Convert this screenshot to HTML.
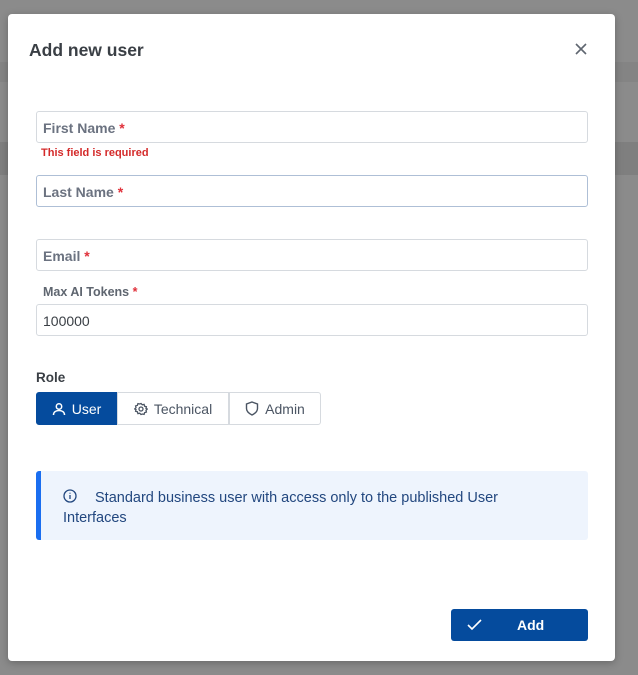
<!DOCTYPE html>
<html><head><meta charset="utf-8"><style>
*{box-sizing:border-box;margin:0;padding:0}
body{width:638px;height:675px;background:#8b8b8b;font-family:"Liberation Sans",sans-serif;position:relative;overflow:hidden}
.bg1{position:absolute;left:0;right:0;top:62px;height:20px;background:#848484}
.bg2{position:absolute;left:0;right:0;top:142px;height:33px;background:#7f7f7f}
.modal{position:absolute;left:8px;top:14px;width:607px;height:647px;background:#fff;border-radius:4px;box-shadow:0 2px 8px rgba(0,0,0,.25)}
.title{position:absolute;left:21px;top:26px;font-size:17.5px;font-weight:bold;color:#3a3f45}
.close{position:absolute;left:566px;top:28px}
.inp{position:absolute;left:28px;width:552px;height:32px;border:1px solid #d6dadf;border-radius:3px;font-size:14px;color:#6b7280;font-weight:bold;padding:8px 6px}
.inp b{color:#e0303a}
.err{position:absolute;left:33px;top:133px;font-size:11px;font-weight:bold;color:#d42a2a}
.lbl{position:absolute;left:35px;font-size:12.5px;font-weight:bold;color:#5f6670}
.lbl b{color:#e0303a}
.role{position:absolute;left:28px;top:356px;font-size:13.5px;color:#3a3f45;font-weight:bold}
.seg{position:absolute;top:378px;height:33px;border:1px solid #d6dadf;font-size:14px;color:#4b5563;display:flex;align-items:center;gap:6px;justify-content:center}
.info{position:absolute;left:28px;top:457px;width:552px;height:69px;background:#eef4fd;border-left:5px solid #1a6ef0;border-radius:3px;color:#22477f;font-size:14.5px;line-height:20px;padding:17px 10px 0 22px}
.btn{position:absolute;left:443px;top:595px;width:137px;height:32px;background:#054b9d;border-radius:3px;color:#fff;font-weight:bold;font-size:14px}
</style></head><body>
<div class="bg1"></div><div class="bg2"></div>
<div class="modal">
<div class="title">Add new user</div>
<svg class="close" width="14" height="14" viewBox="0 0 14 14"><path d="M2 2L12 12M12 2L2 12" stroke="#5f6670" stroke-width="1.6"/></svg>
<div class="inp" style="top:97px">First Name <b>*</b></div>
<div class="err">This field is required</div>
<div class="inp" style="top:161px;border-color:#aebfd6">Last Name <b>*</b></div>
<div class="inp" style="top:225px">Email <b>*</b></div>
<div class="lbl" style="top:271px">Max AI Tokens <b>*</b></div>
<div class="inp" style="top:290px;font-weight:normal;color:#3a3f45">100000</div>
<div class="role">Role</div>
<div class="seg" style="left:28px;width:81px;background:#054b9d;color:#fff;border-color:#054b9d;border-radius:3px 0 0 3px"><svg width="14" height="14" viewBox="0 0 14 14" fill="none" stroke="#fff" stroke-width="1.5"><circle cx="7" cy="4.5" r="2.7"/><path d="M1.5 13c0-3 2.5-4.5 5.5-4.5s5.5 1.5 5.5 4.5"/></svg>User</div>
<div class="seg" style="left:109px;width:112px"><svg width="14" height="14" viewBox="0 0 14 14" fill="none" stroke="#4b5563" stroke-width="1.3"><circle cx="7" cy="7" r="2"/><path d="M7 1.5l1.3 1.3 1.8-.4.5 1.8 1.8.5-.4 1.8L13.3 7l-1.3 1.3.4 1.8-1.8.5-.5 1.8-1.8-.4L7 12.5l-1.3-1.3-1.8.4-.5-1.8-1.8-.5.4-1.8L.7 7l1.3-1.3-.4-1.8 1.8-.5.5-1.8 1.8.4z"/></svg>Technical</div>
<div class="seg" style="left:221px;width:92px;border-radius:0 3px 3px 0"><svg width="14" height="15" viewBox="0 0 14 15" fill="none" stroke="#4b5563" stroke-width="1.4"><path d="M7 1L12.5 3v4.5c0 3-2.5 5-5.5 6.5C4 12.5 1.5 10.5 1.5 7.5V3z"/></svg>Admin</div>
<div class="info"><svg style="position:absolute;left:22px;top:18px" width="14" height="14" viewBox="0 0 14 14" fill="none" stroke="#22477f" stroke-width="1.3"><circle cx="7" cy="7" r="6"/><path d="M7 6v4M7 3.8v.8"/></svg><span style="padding-left:32px">Standard business user with access only to the published User</span><br>Interfaces</div>
<div class="btn"><svg style="position:absolute;left:16px;top:10px" width="15" height="12" viewBox="0 0 15 12" fill="none" stroke="#fff" stroke-width="1.6"><path d="M1 6l4 4 9-9"/></svg><span style="position:absolute;left:66px;top:8px">Add</span></div>
</div>
</body></html>
